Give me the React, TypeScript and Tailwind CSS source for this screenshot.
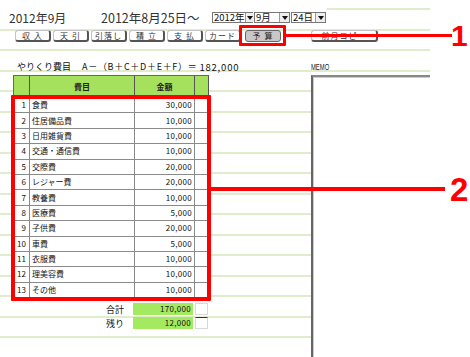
import React from "react";

const rows: [string, string][] = [
  ["食費", "30,000"],
  ["住居備品費", "10,000"],
  ["日用雑貨費", "10,000"],
  ["交通・通信費", "10,000"],
  ["交際費", "20,000"],
  ["レジャー費", "20,000"],
  ["教養費", "10,000"],
  ["医療費", "5,000"],
  ["子供費", "20,000"],
  ["車費", "5,000"],
  ["衣服費", "10,000"],
  ["理美容費", "10,000"],
  ["その他", "10,000"],
];

const buttons = ["収 入", "天 引", "引落し", "積 立", "支 払", "カード"];

const totals: [string, string][] = [
  ["合計", "170,000"],
  ["残り", "12,000"],
];

function Arrow() {
  return (
    <span className="flex h-full w-[10px] shrink-0 items-center justify-center border-l border-[#999] bg-[#eeeeee]">
      <svg width="6" height="4" viewBox="0 0 6 4">
        <path d="M0 0h6L3 4z" fill="#111" />
      </svg>
    </span>
  );
}

function Select({ label, className }: { label: string; className: string }) {
  return (
    <div className={`flex h-[11px] items-stretch border border-[#777] bg-white ${className}`}>
      <span className="flex flex-1 items-center whitespace-nowrap pl-[1px] text-[9.5px] leading-[9px] text-[#111]">{label}</span>
      <Arrow />
    </div>
  );
}

export default function App() {
  return (
    <div className="relative h-[357px] w-[470px] overflow-hidden bg-white font-['Noto_Sans_CJK_JP',sans-serif] text-[#222]">
      <div className="h-full w-[430px] bg-[repeating-linear-gradient(180deg,transparent_0px,transparent_8px,#e0edcd_8px,#e0edcd_10px,transparent_10px,transparent_20.5px)]">
        {/* date header */}
        <div className="flex h-[27px] w-[327px] items-start whitespace-nowrap bg-white pt-[12px]">
          <span className="ml-[9px] w-[92px] shrink-0 text-[12px] leading-[11px] text-[#333]">2012年9月</span>
          <span className="w-[111px] shrink-0 text-[12.5px] leading-[11px] text-[#333]">2012年8月25日～</span>
          <div className="flex gap-[1px]">
            <Select label="2012年" className="w-[41px]" />
            <Select label="9月" className="w-[36px]" />
            <Select label="24日" className="w-[35px]" />
          </div>
        </div>

        {/* tab buttons */}
        <div className="mt-[3px] flex h-[12px] items-stretch whitespace-nowrap pl-[15px]">
          <div className="flex gap-[2px]">
            {buttons.map((b) => (
              <div
                key={b}
                className="flex w-[36px] items-center justify-center rounded-[3px] border border-r-2 border-b-2 border-[#c4c4c4] border-r-[#555] border-b-[#555] bg-white text-[8px] leading-none tracking-[1px] text-[#333]"
              >
                {b}
              </div>
            ))}
          </div>
          <div className="ml-[4px] flex w-[36px] items-center justify-center rounded-[3px] border border-[#666] bg-[#c8c8c8] text-[8px] leading-none tracking-[1px] text-[#222]">
            予 算
          </div>
          <div className="ml-[30px] flex w-[67px] items-center justify-center rounded-[3px] border border-r-2 border-b-2 border-[#c4c4c4] border-r-[#555] border-b-[#555] bg-white text-[8px] leading-none tracking-[1px] text-[#333]">
            前月コピー
          </div>
        </div>

        {/* budget table + memo */}
        <div className="mt-[18px] flex">
          <div className="ml-[13px] w-[196px] shrink-0">
            <div className="flex h-[15px] items-start whitespace-nowrap pl-[4px] pt-[2px] text-[9px] leading-[10px] text-[#111]">
              <span>やりくり費目</span>
              <span className="ml-[11px] tracking-[0.7px]">A－（B＋C＋D＋E＋F）＝</span>
              <span className="ml-[2px] text-[9.5px] tracking-[0.8px]">182,000</span>
            </div>

            <div className="border-l border-t border-[#666] bg-white">
              <div className="flex h-[22px] bg-[#a6e15e] text-[8px] font-bold text-[#222]">
                <div className="w-[16px] shrink-0 border-r border-b border-[#555]" />
                <div className="flex w-[105px] shrink-0 items-center justify-center border-r border-b border-[#555]">費目</div>
                <div className="flex w-[60px] shrink-0 items-center justify-center border-r border-b border-[#555]">金額</div>
                <div className="w-[14px] shrink-0 border-r border-b border-[#555]" />
              </div>
              {rows.map(([name, amount], i) => (
                <div key={name} className="flex h-[15.4px] whitespace-nowrap text-[8px] leading-none text-[#111]">
                  <div className="flex w-[16px] shrink-0 items-center justify-end border-r border-b border-[#8a8a8a] pr-[3px]">{i + 1}</div>
                  <div className="flex w-[105px] shrink-0 items-center border-r border-b border-[#8a8a8a] pl-[2px]">{name}</div>
                  <div className="flex w-[60px] shrink-0 items-center justify-end border-r border-b border-[#8a8a8a] pr-[2px] tracking-[0.3px]">{amount}</div>
                  <div className="w-[14px] shrink-0 border-r border-b border-[#8a8a8a]" />
                </div>
              ))}
            </div>

            <div className="mt-[5px] flex flex-col gap-[2px] whitespace-nowrap">
              {totals.map(([label, value], i) => (
                <div key={label} className="flex h-[12px]">
                  <div className="flex w-[120px] shrink-0 items-center justify-end pr-[9px] text-[9px] leading-none text-[#111]">{label}</div>
                  <div className="flex w-[60px] shrink-0 items-center justify-end bg-[#a3ea60] pr-[2px] text-[8px] leading-none tracking-[0.3px] text-[#111]">{value}</div>
                  <div className={`ml-[2px] w-[13px] shrink-0 border border-[#d8d8d8] bg-white ${i === 1 ? "border-t-[#333]" : ""}`} />
                </div>
              ))}
            </div>
          </div>

          <div className="ml-[102px] flex-1">
            <div className="flex h-[15px] items-start pt-[3px]">
              <span className="block origin-left scale-x-[0.65] font-['Liberation_Sans',sans-serif] text-[9px] leading-[9px] text-[#222]">MEMO</span>
            </div>
            <div className="h-[300px] border-l-2 border-t-2 border-[#666] border-t-[#888] bg-white shadow-[inset_1px_1px_0_#ccc]" />
          </div>
        </div>
      </div>

      {/* annotations */}
      <div className="absolute left-[239px] top-[25px] h-[21px] w-[47px] rounded-[1px] border-[3px] border-[#ff0000]" />
      <div className="absolute left-[286px] top-[34px] h-[3px] w-[166px] bg-[#ff0000]" />
      <div className="absolute left-[451px] top-[21px] font-['Liberation_Sans',sans-serif] text-[30px] font-bold leading-[30px] text-[#ff0000]">1</div>

      <div className="absolute left-[11px] top-[95px] h-[206px] w-[200px] rounded-[1px] border-4 border-[#ff0000]" />
      <div className="absolute left-[211px] top-[187px] h-[4px] w-[234px] bg-[#ff0000]" />
      <div className="absolute left-[450px] top-[173px] font-['Liberation_Sans',sans-serif] text-[33px] font-bold leading-[33px] text-[#ff0000]">2</div>
    </div>
  );
}
